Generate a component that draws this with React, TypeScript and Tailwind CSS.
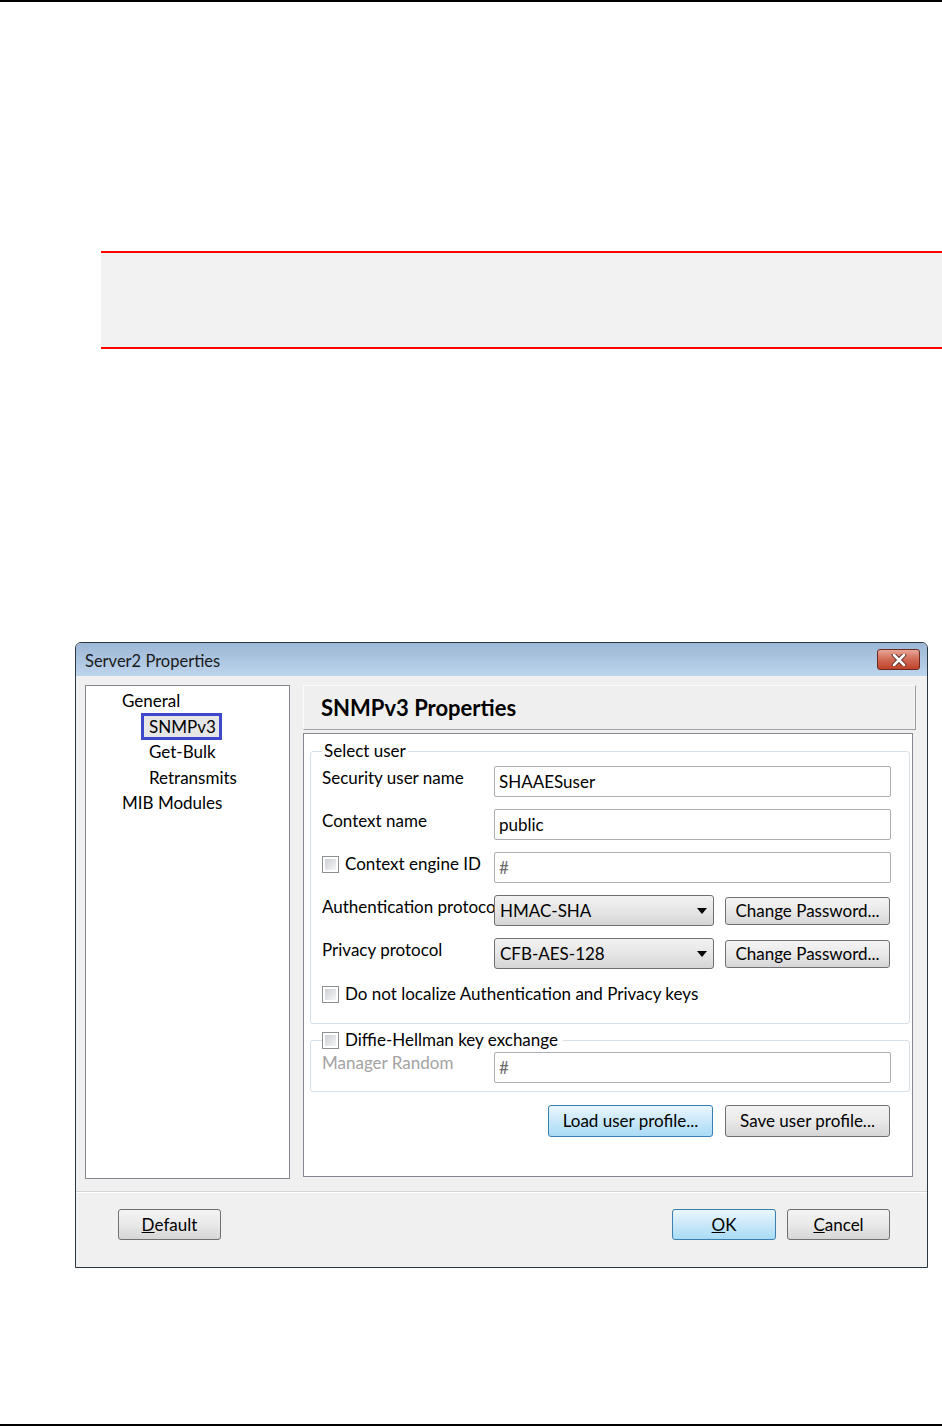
import React from "react";

const font = { fontFamily: "Lato, 'Open Sans', sans-serif" };

function Checkbox() {
  return (
    <span className="inline-block w-[17px] h-[17px] shrink-0 border border-[#8e8f8f] bg-white p-[2px]">
      <span className="block w-full h-full bg-gradient-to-br from-[#cbcfd5] to-[#f6f6f6]" />
    </span>
  );
}

function Button({ children, primary, w }: { children: React.ReactNode; primary?: boolean; w: string }) {
  return (
    <div
      className={`${w} h-full flex items-center justify-center rounded-[3px] border text-[17px] text-black ${
        primary
          ? "border-[#3c7fb1] bg-gradient-to-b from-[#eaf6fd] via-[#c9e8f9] to-[#a9dbf6]"
          : "border-[#707070] bg-gradient-to-b from-[#f4f4f4] via-[#e9e9e9] to-[#d6d6d6]"
      }`}
    >
      {children}
    </div>
  );
}

function Combo({ value }: { value: string }) {
  return (
    <div className="w-[220px] h-[31px] flex items-center rounded-[3px] border border-[#707070] bg-gradient-to-b from-[#f2f2f2] via-[#e6e6e6] to-[#d5d5d5] pl-[5px] pr-[6px] text-[17px]">
      <span className="flex-1">{value}</span>
      <svg width="10" height="6" viewBox="0 0 10 6">
        <path d="M0 0 H10 L5 6 Z" fill="#000" />
      </svg>
    </div>
  );
}

function TextBox({ value, hint }: { value: string; hint?: boolean }) {
  return (
    <div
      className={`w-[397px] h-[31px] flex items-center rounded-[2px] border border-[#abadb3] bg-white pl-[4px] text-[17px] ${
        hint ? "text-[#6d6d6d]" : "text-black"
      }`}
    >
      {value}
    </div>
  );
}

function Row({ label, children, check }: { label: string; children: React.ReactNode; check?: boolean }) {
  return (
    <div className="flex items-start h-[31px]">
      <div className="w-[172px] overflow-hidden whitespace-nowrap flex items-center gap-[6px] pt-[1px] leading-[22px] text-[17px]">
        {check && <Checkbox />}
        {label}
      </div>
      {children}
    </div>
  );
}

export default function App() {
  const tree = [
    { label: "General", indent: "pl-[36px]" },
    { label: "SNMPv3", indent: "pl-[63px]", selected: true },
    { label: "Get-Bulk", indent: "pl-[63px]" },
    { label: "Retransmits", indent: "pl-[63px]" },
    { label: "MIB Modules", indent: "pl-[36px]" },
  ];

  return (
    <div className="w-[942px] h-[1426px] bg-white flex flex-col text-black" style={font}>
      <div className="h-[2px] bg-black" />
      <div className="h-[249px]" />
      <div className="ml-[101px] h-[98px] border-y-2 border-[#ff0000] bg-[#f2f2f2]" />
      <div className="h-[293px]" />

      {/* dialog */}
      <div className="ml-[75px] w-[853px] h-[626px] flex flex-col rounded-t-[6px] border border-[#2a3640] bg-[#f0f0f0] overflow-hidden">
        <div className="h-[33px] shrink-0 flex items-center pl-[9px] pr-[7px] bg-gradient-to-b from-[#9cb7d5] to-[#bdd4ec] text-[16.5px] text-[#1a1a1a]">
          <span className="pt-[3px]">Server2 Properties</span>
          <div className="ml-auto w-[43px] h-[21px] flex items-center justify-center rounded-[3px] border border-[#6b2a20] bg-gradient-to-b from-[#e8a597] via-[#cf6a55] to-[#c0412a]">
            <svg width="16" height="12" viewBox="0 0 16 12">
              <path d="M3 1 L13 11 M13 1 L3 11" stroke="#5a2a22" strokeWidth="4.5" strokeLinecap="round" />
              <path d="M3 1 L13 11 M13 1 L3 11" stroke="#ffffff" strokeWidth="2.6" strokeLinecap="round" />
            </svg>
          </div>
        </div>

        <div className="flex pt-[9px] pl-[9px]">
          {/* tree */}
          <div className="w-[205px] h-[494px] border border-[#828790] bg-white pt-[2px] text-[17px]">
            {tree.map((t) => (
              <div key={t.label} className={`h-[25.6px] flex items-center ${t.indent}`}>
                {t.selected ? (
                  <span className="-ml-[8px] h-[27px] inline-flex items-center border-[3px] border-[#3f48cc] bg-[#e6e6e6] pl-[5px] pr-[3px]">
                    {t.label}
                  </span>
                ) : (
                  t.label
                )}
              </div>
            ))}
          </div>

          <div className="ml-[13px] flex flex-col">
            <div className="w-[613px] h-[45px] flex items-center pl-[17px] border border-t-[#fbfbfb] border-l-[#fbfbfb] border-r-[#a0a0a0] border-b-[#a0a0a0] bg-[#efefef] text-[22px] font-bold">
              SNMPv3 Properties
            </div>

            <div className="mt-[3px] w-[610px] h-[444px] border border-[#828790] bg-white flex flex-col pl-[6px] pr-[2px]">
              <fieldset className="mt-[6px] border border-[#d5dfe5] rounded-[3px] pl-[11px] pt-[4px] pb-[18px]">
                <legend className="px-[2px] leading-[22px] text-[17px]">Select user</legend>
                <div className="flex flex-col gap-[12px]">
                  <Row label="Security user name">
                    <TextBox value="SHAAESuser" />
                  </Row>
                  <Row label="Context name">
                    <TextBox value="public" />
                  </Row>
                  <Row label="Context engine ID" check>
                    <TextBox value="#" hint />
                  </Row>
                  <Row label="Authentication protocol">
                    <div className="flex items-center gap-[11px] h-full">
                      <Combo value="HMAC-SHA" />
                      <div className="h-[28px]">
                        <Button w="w-[165px]">Change Password...</Button>
                      </div>
                    </div>
                  </Row>
                  <Row label="Privacy protocol">
                    <div className="flex items-center gap-[11px] h-full">
                      <Combo value="CFB-AES-128" />
                      <div className="h-[28px]">
                        <Button w="w-[165px]">Change Password...</Button>
                      </div>
                    </div>
                  </Row>
                </div>
                <div className="mt-[14px] flex items-center gap-[6px] leading-[22px] text-[17px]">
                  <Checkbox />
                  Do not localize Authentication and Privacy keys
                </div>
              </fieldset>

              <fieldset className="mt-[5px] border border-[#d5dfe5] rounded-[3px] pl-[11px] pt-[1px] pb-[8px]">
                <legend className="pr-[5px] flex items-center gap-[6px] leading-[22px] text-[17px]">
                  <Checkbox />
                  Diffie-Hellman key exchange
                </legend>
                <div className="flex items-start h-[31px]">
                  <div className="w-[172px] leading-[22px] text-[17px] text-[#a3a3a3]">Manager Random</div>
                  <TextBox value="#" hint />
                </div>
              </fieldset>

              <div className="mt-[13px] h-[32px] flex justify-end gap-[12px] pr-[20px]">
                <Button w="w-[165px]" primary>
                  Load user profile...
                </Button>
                <Button w="w-[165px]">Save user profile...</Button>
              </div>
            </div>
          </div>
        </div>

        <div className="mt-[12px] border-t border-[#d5d5d5] border-b border-b-[#ffffff]" />

        <div className="mt-[16px] h-[31px] flex pl-[42px] pr-[37px]">
          <Button w="w-[103px]">
            <span className="underline">D</span>efault
          </Button>
          <div className="ml-auto flex gap-[11px] h-full">
            <Button w="w-[104px]" primary>
              <span className="underline">O</span>K
            </Button>
            <Button w="w-[103px]">
              <span className="underline">C</span>ancel
            </Button>
          </div>
        </div>
      </div>

      <div className="flex-1" />
      <div className="h-[2px] bg-black" />
    </div>
  );
}
